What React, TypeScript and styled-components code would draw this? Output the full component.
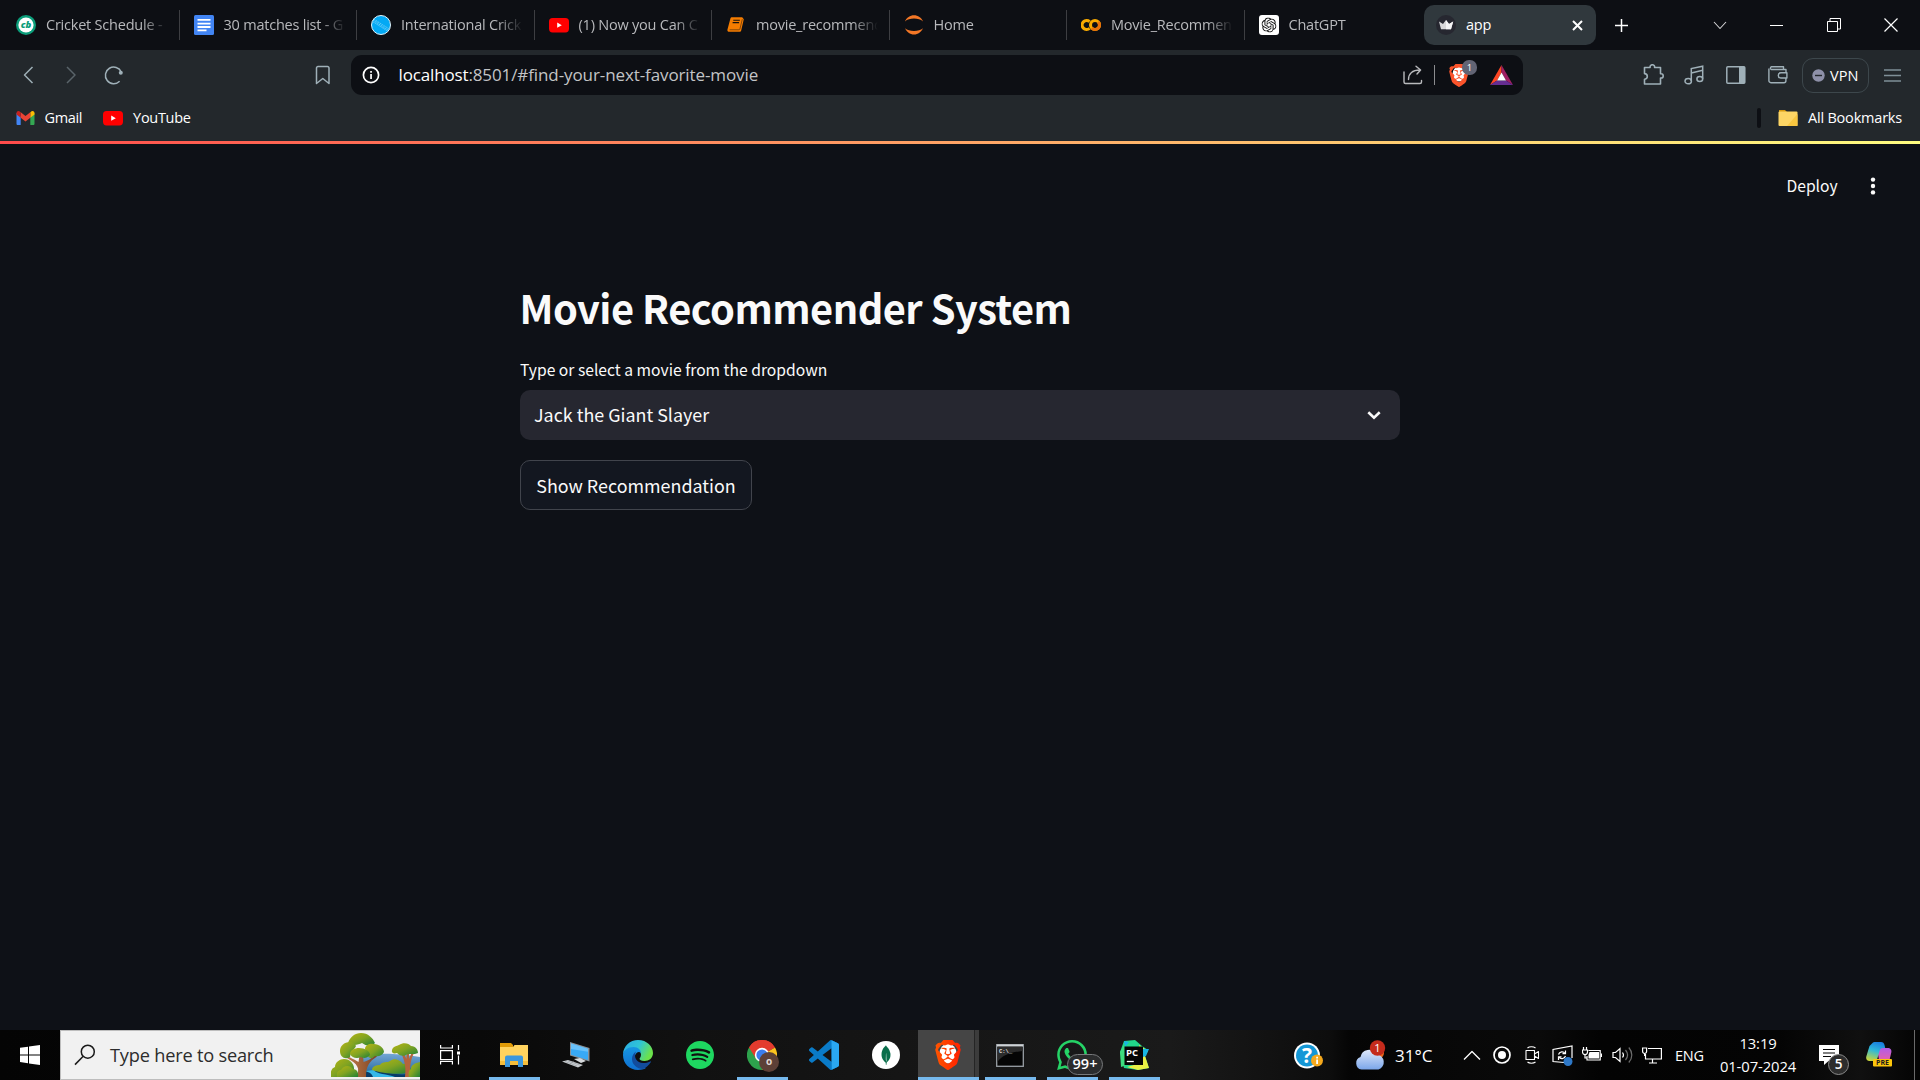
import React from "react";
import styled, { createGlobalStyle, css } from "styled-components";
import { SiBrave, SiMongodb, SiOpenai, SiSpotify, SiWhatsapp } from "react-icons/si";

const UI_FONT = `"Open Sans", "Noto Sans", sans-serif`;
const PAGE_FONT = `"Noto Sans CJK SC", "Noto Sans", sans-serif`;

const GlobalStyle = createGlobalStyle`
  * { box-sizing: border-box; }
  body { margin: 0; background: #0e1117; overflow: hidden; }
  svg { display: block; flex: none; }
  button { background: none; border: 0; padding: 0; color: inherit; font: inherit; }
`;

const Screen = styled.div`
  width: 1920px;
  height: 1080px;
  display: flex;
  flex-direction: column;
  overflow: hidden;
  font-family: ${UI_FONT};
  color: #fff;
`;

/* ---------- tab strip ---------- */

const TabStrip = styled.header`
  height: 50px;
  flex: none;
  display: flex;
  align-items: center;
  background: #0d0f14;
`;

const Tab = styled.div<{ $last?: boolean }>`
  width: 177.5px;
  height: 30px;
  flex: none;
  display: flex;
  align-items: center;
  gap: 10px;
  padding-left: 14px;
  border-right: 1px solid ${(p) => (p.$last ? "transparent" : "#3d3e42")};
`;

const TabList = styled.div`
  display: flex;
  padding-left: 2px;
`;

const TabTitle = styled.span`
  width: 122px;
  overflow: hidden;
  white-space: nowrap;
  font-size: 14.5px;
  line-height: 24px;
  letter-spacing: -0.22px;
  color: #b8b9bc;
  mask-image: linear-gradient(90deg, #000 96px, transparent 122px);
`;

const ActiveTab = styled.div`
  width: 172px;
  height: 40px;
  margin-left: 2px;
  display: flex;
  align-items: center;
  padding: 0 13px 0 12px;
  border-radius: 10px;
  background: #30383d;
`;

const ActiveTitle = styled.span`
  flex: 1;
  margin-left: 10px;
  font-size: 14.5px;
  line-height: 24px;
  letter-spacing: -0.2px;
`;

const NewTab = styled.button`
  margin-left: 18px;
`;

const WindowControls = styled.div`
  margin-left: auto;
  display: flex;
  align-items: center;
`;

const WindowButton = styled.button<{ $w: number }>`
  width: ${(p) => p.$w}px;
  height: 50px;
  display: flex;
  align-items: center;
  justify-content: center;
`;

/* ---------- toolbar ---------- */

const Toolbar = styled.div`
  height: 50px;
  flex: none;
  display: flex;
  align-items: center;
  background: #23282c;
`;

const ToolButton = styled.button<{ $ml?: number }>`
  margin-left: ${(p) => p.$ml ?? 0}px;
  display: flex;
`;

const AddressBar = styled.div`
  width: 1172px;
  height: 40px;
  margin-left: 20px;
  display: flex;
  align-items: center;
  padding: 0 10px 0 11px;
  border-radius: 11px;
  background: #0d0f14;
`;

const Url = styled.span`
  flex: 1;
  margin-left: 18.5px;
  font-size: 17px;
  line-height: 26px;
  letter-spacing: -0.1px;
  color: #c3c4c6;
`;

const Host = styled.span`
  color: #fff;
  letter-spacing: -0.15px;
`;

const AddressDivider = styled.i`
  width: 1px;
  height: 20px;
  margin: 0 14px 0 11px;
  background: #8b8c8f;
`;

const Shield = styled.div`
  position: relative;
  width: 20px;
  height: 23px;
  margin-right: 21px;
`;

const ShieldCount = styled.span`
  position: absolute;
  left: 13px;
  top: -4px;
  width: 15px;
  height: 15px;
  border-radius: 7px;
  background: #626474;
  font-size: 9.5px;
  line-height: 15px;
  text-align: center;
`;

const VpnPill = styled.button`
  width: 67px;
  height: 35px;
  margin-left: 14px;
  display: flex;
  align-items: center;
  gap: 5px;
  padding-left: 9px;
  border: 1px solid #3d474c;
  border-radius: 11px;
  font-size: 14.5px;
  letter-spacing: 0.1px;
`;

/* ---------- bookmarks ---------- */

const Bookmarks = styled.nav`
  height: 41px;
  flex: none;
  display: flex;
  align-items: center;
  padding: 0 18px 5px 15.5px;
  background: #23282c;
`;

const Bookmark = styled.a<{ $gap: number; $mr?: number; $ls: number }>`
  display: flex;
  align-items: center;
  gap: ${(p) => p.$gap}px;
  margin-right: ${(p) => p.$mr ?? 0}px;
  font-size: 14.5px;
  line-height: 24px;
  letter-spacing: ${(p) => p.$ls}px;
`;

const BookmarkDivider = styled.i`
  width: 4px;
  height: 20px;
  margin: 0 17px 0 auto;
  border-radius: 2px;
  background: #0d0f14;
`;

/* ---------- streamlit page ---------- */

const Decoration = styled.div`
  height: 3px;
  flex: none;
  background: linear-gradient(90deg, #ff4b4b, #fffd80);
`;

const Page = styled.main`
  flex: 1;
  background: #0e1117;
  font-family: ${PAGE_FONT};
  color: #fafafa;
`;

const PageHeader = styled.div`
  height: 84px;
  display: flex;
  align-items: center;
  justify-content: flex-end;
  gap: 32px;
  padding-right: 44.5px;
  font-size: 15.67px;
  letter-spacing: -0.05px;
`;

const HeaderLabel = styled.span`
  padding-bottom: 2px;
`;

const Block = styled.section`
  width: 880px;
  margin: 0 auto;
  padding-top: 49px;
  display: flex;
  flex-direction: column;
  align-items: flex-start;
`;

const Title = styled.h1`
  margin: 0 0 21px -0.5px;
  font-size: 39.8px;
  font-weight: 700;
  line-height: 60px;
  letter-spacing: -0.53px;
  white-space: nowrap;
`;

const Label = styled.label`
  font-size: 15.67px;
  line-height: 24px;
  margin-bottom: 8px;
`;

const Select = styled.div`
  width: 880px;
  height: 50px;
  display: flex;
  align-items: center;
  justify-content: space-between;
  padding: 0 19px 0 14px;
  border-radius: 10px;
  background: #262730;
  font-size: 17.9px;
`;

const SelectValue = styled.span`
  padding-bottom: 2px;
`;

const ActionButton = styled.button`
  width: 232px;
  height: 50px;
  margin-top: 20px;
  padding-bottom: 1px;
  border: 1px solid #41444c;
  border-radius: 10px;
  background: #131720;
  font-size: 17.9px;
`;

/* ---------- taskbar ---------- */

const Taskbar = styled.footer`
  height: 50px;
  flex: none;
  display: flex;
  background: linear-gradient(90deg, #040404 0, #090909 480px, #111 700px, #151515 900px, #1a1a1a 1170px, #0d0d0d 1330px, #050505 1350px, #0a0a0a 1540px, #030303 1600px, #040404 1780px, #101010 1860px, #040404 1920px);
`;

const Cell = styled.div<{ $w: number }>`
  width: ${(p) => p.$w}px;
  flex: none;
  display: flex;
  align-items: center;
  justify-content: center;
`;

const SearchBox = styled.div`
  width: 360px;
  display: flex;
  align-items: center;
  padding-left: 13px;
  border: 1px solid #bdbdbd;
  border-right: 0;
  background: #f1f1f1;
`;

const SearchHint = styled.span`
  flex: 1;
  margin-left: 14px;
  font-size: 18.2px;
  letter-spacing: -0.2px;
  color: #2c2c2c;
`;

const AppSlot = styled.div<{ $open?: boolean; $active?: boolean }>`
  width: 62px;
  flex: none;
  display: flex;
  flex-direction: column;
  align-items: center;
  justify-content: center;
  padding-top: 3px;
  ${(p) =>
    p.$active
      ? css`
          border-left: 1px solid transparent;
          background: linear-gradient(90deg, #454545 56px, #252525 56px, #252525 57px, #3c3c3c 57px) padding-box;
        `
      : ""}
  &::after {
    content: "";
    align-self: ${(p) => (p.$active ? "stretch" : "center")};
    width: ${(p) => (p.$active ? "auto" : "51px")};
    height: 3px;
    background: ${(p) => (p.$open ? "#76b9ed" : "transparent")};
  }
`;

const AppIcon = styled.div`
  position: relative;
  flex: 1;
  display: flex;
  align-items: center;
  justify-content: center;
`;

const ActiveAppIcon = styled.div`
  margin-right: 2px;
`;

const Unread = styled.span`
  position: absolute;
  left: 10px;
  top: 21px;
  width: 36px;
  height: 21px;
  border: 1px solid #77797b;
  border-radius: 11px;
  background: #2b2c2d;
  font-size: 14.5px;
  font-weight: 600;
  line-height: 18px;
  text-align: center;
`;

const AvatarBadge = styled.span`
  position: absolute;
  left: 12px;
  top: 19px;
  width: 20px;
  height: 20px;
  border-radius: 50%;
  background: #5d4037;
  font-size: 10px;
  font-weight: 700;
  line-height: 19px;
  text-align: center;
  color: #e0d8d4;
`;

const Tray = styled.div`
  margin-left: auto;
  display: flex;
  align-items: center;
`;

const TrayItem = styled.div<{ $ml: number }>`
  margin-left: ${(p) => p.$ml}px;
  display: flex;
`;

const TrayText = styled.span<{ $ml: number; $w: number; $size: number; $ls: number }>`
  width: ${(p) => p.$w}px;
  margin-left: ${(p) => p.$ml}px;
  font-size: ${(p) => p.$size}px;
  letter-spacing: ${(p) => p.$ls}px;
  white-space: nowrap;
`;

const Clock = styled.div`
  width: 78px;
  height: 50px;
  margin-left: 15px;
  display: flex;
  flex-direction: column;
  align-items: center;
  padding-top: 2px;
  font-size: 14.8px;
  line-height: 23px;
  letter-spacing: -0.1px;
  white-space: nowrap;
`;

const Notifications = styled.div`
  position: relative;
  margin-left: 22px;
`;

const NotificationCount = styled.span`
  position: absolute;
  left: 9px;
  top: 9px;
  width: 21px;
  height: 21px;
  border: 1px solid #8a8a8a;
  border-radius: 50%;
  background: #2d2d2d;
  font-size: 13.5px;
  font-weight: 600;
  line-height: 19px;
  text-align: center;
`;

const ShowDesktop = styled.i`
  width: 6px;
  height: 50px;
  margin-left: 22px;
  border-left: 1px solid #6a6a6a;
`;

/* ---------- tab icons ---------- */

const Cricbuzz = () => (
  <svg width="20" height="20" viewBox="0 0 20 20">
    <circle cx="10" cy="10" r="10" fill="#0b9d7a" />
    <circle cx="10" cy="10" r="7.6" fill="#fff" />
    <text x="10" y="13.3" textAnchor="middle" fontFamily="Open Sans" fontSize="9.5" fontWeight="800" fontStyle="italic" fill="#0b9d7a">cb</text>
  </svg>
);
const Docs = () => (
  <svg width="20" height="20" viewBox="0 0 20 20">
    <rect width="20" height="20" rx="1.5" fill="#4285f4" />
    <path d="M3.5 4.8h13M3.5 8.6h13M3.5 12h13M3.5 15.4h9" stroke="#fff" strokeWidth="1.8" />
  </svg>
);
const Ball = () => (
  <svg width="20" height="20" viewBox="0 0 20 20">
    <circle cx="10" cy="10" r="9.5" fill="#03a9f4" stroke="#dff3fd" strokeWidth="1" />
    <path d="M1.5 6.5l15 9.5M2.8 4.2l15 9.5M2 5.2l15 9.8" stroke="#7fd4fa" strokeWidth=".8" strokeDasharray="1.6 .7" />
  </svg>
);
const YouTube = () => (
  <svg width="20" height="20" viewBox="0 0 20 20">
    <rect y="3" width="20" height="14.4" rx="3.6" fill="#f00" />
    <path d="M8.2 7.6l4.6 2.6-4.6 2.6z" fill="#fff" />
  </svg>
);
const Notebook = () => (
  <svg width="20" height="20" viewBox="0 0 20 20">
    <path d="M6.1 2.2h10.1l1.6 2-2.6 11.2c-.2.9-.8 1.4-1.600 1.400H3.300c-1.300 0-2.200-.9-1.900-2.100L4.400 3.600c.2-.9.8-1.400 1.700-1.400z" fill="#f57c00" />
    <path d="M7.300 5.200h6.500M6.600 7.600h6.500" stroke="#14100c" strokeWidth="1.100" fill="none" />
    <path d="M3.600 14.800h9.400c.5 0 .8-.2.9-.7l2.400-9.900" stroke="#7a4208" strokeWidth=".9" fill="none" />
  </svg>
);
const Jupyter = () => (
  <svg width="20" height="20" viewBox="0 0 20 20" fill="#f37726">
    <path d="M1 6.4C2.6 2.7 6 .3 10 .3s7.400 2.400 9 6.100C16.800 4.600 13.600 3.600 10 3.600S3.200 4.600 1 6.400z" />
    <path d="M1 13.200c2.200 1.800 5.400 2.800 9 2.800s6.800-1 9-2.800c-1.600 3.700-5 6.300-9 6.300s-7.400-2.600-9-6.300z" />
  </svg>
);
const Colab = () => (
  <svg width="20" height="20" viewBox="0 0 20 20" fill="none" strokeWidth="3.100">
    <path d="M8.600 6.600A4.500 4.500 0 1 0 8.600 13.400" stroke="#f9ab00" />
    <circle cx="14" cy="10" r="4.500" stroke="#f9ab00" />
    <path d="M17.200 6.800A4.500 4.500 0 0 1 10.800 13.200" stroke="#e8710a" />
  </svg>
);
const ChatGpt = () => (
  <svg width="20" height="20" viewBox="0 0 20 20">
    <rect width="20" height="20" rx="3" fill="#fff" />
    <SiOpenai x={2.5} y={2.5} size={15} color="#111" />
  </svg>
);
const Crown = () => (
  <svg width="20" height="20" viewBox="0 0 20 20">
    <circle cx="10" cy="10" r="10" fill="#262730" />
    <path d="M3 6.600l4 2.500 3-4 3 4 4.200-2.500-2.200 7.600H5z" fill="#d8d8da" />
    <path d="M10 5.100l3 4 4.200-2.500-2.200 7.600h-5z" fill="#f4f4f5" />
  </svg>
);

/* ---------- browser icons ---------- */

const Stroke = ({ w, h, d, c = "#9fb0b8", s = 1.5 }: { w: number; h: number; d: string; c?: string; s?: number }) => (
  <svg width={w} height={h} viewBox={`0 0 ${w} ${h}`} fill="none" stroke={c} strokeWidth={s} strokeLinejoin="round">
    <path d={d} />
  </svg>
);
const Reload = () => (
  <svg width="20" height="20" viewBox="0 0 20 20" fill="none" stroke="#9fb0b8" strokeWidth="1.500">
    <path d="M15.600 16.200A8.300 8.300 0 1 1 17.300 7" />
    <circle cx="16.800" cy="7.700" r="2" fill="#9fb0b8" stroke="none" />
  </svg>
);
const Info = () => (
  <svg width="18" height="18" viewBox="0 0 18 18">
    <circle cx="9" cy="9" r="7.600" fill="none" stroke="#fff" strokeWidth="1.700" />
    <path d="M8.200 8h1.700v5H8.200zM8.200 5h1.700v1.700H8.200z" fill="#fff" />
  </svg>
);
const Share = () => (
  <svg width="20" height="20" viewBox="0 0 20 20" fill="none" stroke="#b9babd" strokeWidth="1.400" strokeLinejoin="round" strokeLinecap="round">
    <path d="M1 7v10a1.500 1.500 0 0 0 1.500 1.500h14.500a1.500 1.500 0 0 0 1.500-1.500v-1.500" />
    <path d="M5.500 14.500c0-5.500 3.500-9.500 11.500-9.500M13 1.200L17.600 5 14 9" />
  </svg>
);
const BraveShield = () => (
  <svg width="20" height="23" viewBox="0 0 20 23">
    <ellipse cx="10" cy="10" rx="6.500" ry="7.500" fill="#fff" />
    <SiBrave x={-1.500} y={0} size={23} color="#fb542b" />
  </svg>
);
const Bat = () => (
  <svg width="23" height="20" viewBox="0 0 23 20">
    <path d="M11.500 0L0 20l7-4.500 4.500-8z" fill="#ff4724" />
    <path d="M11.500 0L23 20l-7-4.500-4.500-8z" fill="#9e1f63" />
    <path d="M0 20h23l-7-4.500H7z" fill="#662d91" />
    <path d="M11.500 7.500L16 15.500H7z" fill="#fff" />
  </svg>
);
const Puzzle = () => (
  <Stroke w={22} h={22} d="M1.500 3.500h5.600a2.300 2.300 0 1 1 4.500 0h5.900v6.300h.6a2 2 0 0 1 0 4.200h-.6v6H1.500v-4.800a2.800 2.800 0 0 0 0-5.600z" s={1.600} />
);
const Music = () => (
  <svg width="20" height="20" viewBox="0 0 20 20" fill="none" stroke="#9fb0b8" strokeWidth="1.500">
    <path d="M7.300 16V3.600L18.700 1.200v12.600M7.300 8L18.700 5.200" />
    <ellipse cx="4.200" cy="16.200" rx="3.200" ry="2.600" />
    <ellipse cx="15.800" cy="14" rx="2.900" ry="2.500" />
  </svg>
);
const Sidebar = () => (
  <svg width="20" height="18" viewBox="0 0 20 18">
    <rect x=".8" y=".8" width="18" height="16.400" rx="1" fill="none" stroke="#9fb0b8" strokeWidth="1.500" />
    <path d="M13 .8h6v16.400h-6z" fill="#9fb0b8" />
  </svg>
);
const Wallet = () => (
  <Stroke w={20} h={18} d="M18 6V3.500H3.200a1.600 1.600 0 0 1 0-2.700H15.500v2.500M.9 2.500v12.200a2 2 0 0 0 2 2h13a2 2 0 0 0 2-2V12.500M18.900 6.800v5.200h-6a2.600 2.600 0 0 1 0-5.200z" s={1.400} />
);
const VpnDot = () => (
  <svg width="13" height="13" viewBox="0 0 13 13">
    <circle cx="6.500" cy="6.500" r="6.200" fill="#8e90a8" />
    <path d="M3 6.500h7" stroke="#23282c" strokeWidth="1.400" />
  </svg>
);
const Gmail = () => (
  <svg width="19" height="14" viewBox="0 0 19 14">
    <path d="M.5 2v10.700c0 .7.500 1.300 1.300 1.300H4.700V5z" fill="#4285f4" />
    <path d="M18.500 2v10.700c0 .7-.5 1.300-1.300 1.300H14.300V5z" fill="#34a853" />
    <path d="M14.300 1.300V6.800l4.200-3.200V2c0-1.700-1.900-2.500-3.100-1.600z" fill="#fbbc04" />
    <path d="M4.700 6.800V1.300l4.800 3.600 4.800-3.600v5.500L9.500 10.400z" fill="#ea4335" />
    <path d="M.5 2v1.600l4.200 3.200V1.300L3.600.4C2.400-.5.5.3.5 2z" fill="#c5221f" />
  </svg>
);
const BookmarkFolder = () => (
  <svg width="20" height="17" viewBox="0 0 20 17">
    <path d="M1 0h6l2 2H1z" fill="#d99a10" />
    <rect x=".5" y="1.500" width="19" height="14.500" rx="1" fill="#fdd565" />
    <path d="M9 16L19.500 4v12z" fill="#f8c640" />
  </svg>
);

/* ---------- taskbar icons ---------- */

const Windows = () => (
  <svg width="20" height="20" viewBox="0 0 20 20" fill="#fff">
    <path d="M0 2.800L8 1.700V9.400H0zM9 1.600L20 0v9.400H9zM0 10.400h8v7.800l-8-1.100zM9 10.400h11V20L9 18.400z" />
  </svg>
);
const Magnifier = () => (
  <svg width="22" height="22" viewBox="0 0 22 22" fill="none" stroke="#1a1a1a" strokeWidth="1.500">
    <circle cx="13.800" cy="7.700" r="6.500" />
    <path d="M9.200 12.300L1 20.600" />
  </svg>
);
const Landscape = () => (
  <svg width="89" height="44" viewBox="0 0 89 44">
    <defs>
      <linearGradient id="leaf" x1="0" y1="0" x2="1" y2="1"><stop offset="0" stopColor="#b7b512" /><stop offset=".5" stopColor="#80a322" /><stop offset="1" stopColor="#1f8136" /></linearGradient>
      <linearGradient id="hill" x1="0" y1="0" x2="0" y2="1"><stop offset="0" stopColor="#73a6d4" /><stop offset="1" stopColor="#1b5f96" /></linearGradient>
      <linearGradient id="trunk" x1="0" y1="0" x2="1" y2="0"><stop offset="0" stopColor="#c07a48" /><stop offset="1" stopColor="#7d4425" /></linearGradient>
    </defs>
    <path d="M30 26C42 19 60 20 89 24v20H26z" fill="url(#hill)" />
    <path d="M31 39c8-3 20 0 34 2 8 1 14 0 24-2v5H31z" fill="#073c68" />
    <path d="M33 38c6 1 8 3 9 6h22c-7-3-20-3-21-7z" fill="#35b8e8" />
    <path d="M41 37c0-4 5-5 8-5 2-4 8-2 10-4 5-4 11 0 13 3 5-1 8 3 8 8-8 3-28 2-39-2z" fill="url(#leaf)" />
    <path d="M74 44c.8-8 .8-14-4-24l2-1 3.500 7 0-8h2.500l0 8 3-7 2 1c-4 8-4 14-4 24z" fill="#b5643c" />
    <path d="M61 17c1-4 5-4 7-5 4-3 10-2 12 1 5 0 7 4 7 7-4 2-9 0-12 2-4 2-7 0-9-2-3 1-6 0-5-3z" fill="url(#leaf)" />
    <path d="M26 44c3-9 1-13-10-19l1.500-1.500c5 3 8 4 10 5.500L29 19h3l.5 10c4-1 7-3 12-7l1.500 1.500c-8 5-11 10-11 20.500z" fill="url(#trunk)" />
    <path d="M17 10c2-6 7-10 13-10 7 0 12 5 14 10-4 4-9 3-13 0-4 2-10 3-14 0z" fill="url(#leaf)" />
    <path d="M9 18c0-5 4-9 10-9 3 0 5 2 6 4-2 4-5 5-6 11-5 3-10 0-10-6z" fill="url(#leaf)" />
    <path d="M34 16c0-4 5-6 9-5 5 0 10 4 10 8-2 4-6 5-9 4-3 3-7 3-8-2z" fill="url(#leaf)" />
    <path d="M19 21c0-4 5-6 9-6 6 0 11 3 11 7-3 3-6 4-9 2-4 2-9 1-11-3z" fill="url(#leaf)" />
    <path d="M0 44c-1-6 1-9 4-10 0-5 5-8 9-8 6 0 10 5 10 9v9z" fill="url(#leaf)" />
    <path d="M6 44c-1-4 1-7 4-7 3-5 9-5 12-1 4 0 6 4 5 8z" fill="url(#leaf)" />
    <path d="M78 44c-1-4 0-7 2-8 0-4 4-6 9-7v15z" fill="url(#leaf)" />
  </svg>
);
const TaskView = () => (
  <svg width="20" height="20" viewBox="0 0 20 20" fill="none" stroke="#fff" strokeWidth="1.200">
    <path d="M.6 5.600h11.800v9H.6zM.6 0v3h11.800V0M.6 19.500v-3h11.800v3M18.500 0v5M18.500 10.500v9" />
    <path d="M17 6.500h3v3h-3z" fill="#fff" stroke="none" />
  </svg>
);
const Explorer = () => (
  <svg width="28" height="24" viewBox="0 0 28 24">
    <path d="M0 0h11l2 2v4H0z" fill="#e09b07" />
    <path d="M0 4h13l1.500-2H28v20H0z" fill="#ffd35e" />
    <path d="M0 18h28v4H0z" fill="#f4bd3b" />
    <path d="M5 24V14.500a2 2 0 0 1 2-2h14a2 2 0 0 1 2 2V24h-5v-6H10v6z" fill="#3b97dd" />
  </svg>
);
const Computer = () => (
  <svg width="28" height="26" viewBox="0 0 28 26">
    <path d="M8 0l19.500 6v13.500L8 13.500z" fill="#8b9196" />
    <path d="M9 1.500l17 5.200v11.400L9 12.800z" fill="#38a9f5" />
    <path d="M9 1.500l17 5.200v3L9 7z" fill="#69c1f9" />
    <path d="M12 17l6-1 6 3-5 2z" fill="#d7dadc" />
    <path d="M0 19.500l6-1.500 15 5-5 2.500z" fill="#c9cdd0" />
    <path d="M3 19.500l12 4.500M6 19l12 4M8 22l4-3" stroke="#8b9196" strokeWidth=".5" />
  </svg>
);
const Edge = () => (
  <svg width="30" height="30" viewBox="0 0 30 30">
    <defs>
      <linearGradient id="edgeTop" x1="0" y1="0" x2="1" y2=".4"><stop offset="0" stopColor="#2aa9e6" /><stop offset=".55" stopColor="#2fc5d6" /><stop offset="1" stopColor="#6be24b" /></linearGradient>
      <linearGradient id="edgeSide" x1="0" y1="0" x2="0" y2="1"><stop offset="0" stopColor="#1796e2" /><stop offset="1" stopColor="#0f6fd0" /></linearGradient>
    </defs>
    <path d="M0 14C.5 6 7 0 15 0c9 0 15 6.500 15 13 0 5-4 8-8.500 8-3.500 0-5-1.300-5-2.200 0-.7 1.500-1.600 1.500-4C18 11 14.500 9 10.500 9 6 9 1 11 0 14z" fill="url(#edgeTop)" />
    <path d="M0 15c0-4.500 5-8 10.500-8 5 0 7.500 3.500 7.500 6-2.500-3-7 .5-6 6 .8 5 5.500 9 11 9.300C20.500 29.500 18 30 15 30 6.500 30 0 23.500 0 15z" fill="url(#edgeSide)" />
    <path d="M9 19c0-3 1.500-6 4-7.500C10 17 14 24 22 23c2.500-.3 4.500-1.300 5.300-1.600.6-.2.900.2.600.7C26 25.500 23 28 20 29 14 29 9 24.500 9 19z" fill="#124c9c" />
  </svg>
);
const Chrome = () => (
  <svg width="30" height="30" viewBox="0 0 30 30">
    <path d="M15 15L2 7.500A15 15 0 0 1 28 7.500z" fill="#e33b2e" />
    <path d="M15 15L2 7.500A15 15 0 0 0 15 30l6.500-11.300z" fill="#2da24c" />
    <path d="M15 15l13-7.500A15 15 0 0 1 15 30l6.500-11.300z" fill="#fcc31e" />
    <path d="M15 7.800h13.100A15 15 0 0 0 2 7.500l6.800 11z" fill="#e33b2e" />
    <circle cx="15" cy="15" r="7.200" fill="#fff" />
    <circle cx="15" cy="15" r="5.600" fill="#3b7ded" />
  </svg>
);
const VsCode = () => (
  <svg width="30" height="30" viewBox="0 0 24 24">
    <path fill="#0a7bc8" d="M23.150 2.587L18.210.21a1.494 1.494 0 0 0-1.705.29l-9.460 8.630-4.120-3.128a.999.999 0 0 0-1.276.057L.327 7.261A1 1 0 0 0 .326 8.740L3.899 12 .326 15.260a1 1 0 0 0 .001 1.479L1.650 17.940a.999.999 0 0 0 1.276.057l4.120-3.128 9.460 8.630a1.492 1.492 0 0 0 1.704.29l4.942-2.377A1.500 1.500 0 0 0 24 20.060V3.939a1.500 1.500 0 0 0-.85-1.352zm-5.146 14.861L10.826 12l7.178-5.448v10.896z" />
    <path fill="#2aa8f2" d="M18 .1l5.150 2.487A1.500 1.500 0 0 1 24 3.939V20.060a1.500 1.500 0 0 1-.85 1.352L18.200 23.800z" />
  </svg>
);
const Mongo = () => (
  <svg width="28" height="28" viewBox="0 0 28 28">
    <circle cx="14" cy="14" r="14" fill="#fff" />
    <SiMongodb x={4} y={4} size={20} color="#0a6e4b" />
  </svg>
);
const BraveApp = () => (
  <svg width="26" height="30" viewBox="0 0 26 30">
    <defs>
      <linearGradient id="brave" x1="0" x2="1"><stop offset="0" stopColor="#ff5500" /><stop offset="1" stopColor="#ff2000" /></linearGradient>
    </defs>
    <ellipse cx="13" cy="13.500" rx="8.500" ry="10" fill="#fff" />
    <SiBrave x={-2} y={0} size={30} style={{ fill: "url(#brave)" }} />
  </svg>
);
const Terminal = () => (
  <svg width="28" height="23" viewBox="0 0 28 23">
    <rect x=".7" y=".7" width="26.600" height="21.600" fill="#050505" stroke="#9aa0a6" strokeWidth="1.300" />
    <path d="M1 1.500h26" stroke="#cfd3d6" strokeWidth="2" />
    <path d="M1.500 3h25v4C16 8 6 11 1.500 18z" fill="#2c2c2c" />
    <text x="3" y="8.800" fontFamily="Liberation Mono" fontSize="5.500" fontWeight="700" fill="#e4e4e4">C:\_</text>
  </svg>
);
const PyCharm = () => (
  <svg width="30" height="30" viewBox="0 0 30 30">
    <path d="M1 12L5 1l11-1 7 6 6 4-3 6 4 12-11 2-14-2z" fill="#21d789" />
    <path d="M20 5l9 6-3 5 4 12-11 2-11-3 14-4z" fill="#e8f044" />
    <path d="M24 9l6 0-3 7-3 1zM5 1l5 1-4 5z" fill="#18b6e4" />
    <path d="M1 12L5 5l3 20-6 2z" fill="#3ddc7f" />
    <rect x="5.500" y="6.500" width="18.500" height="18.500" fill="#050505" />
    <text x="7" y="15.800" fontFamily="Open Sans" fontSize="9.500" fontWeight="700" fill="#fff">PC</text>
    <path d="M7.800 21.500h7" stroke="#fff" strokeWidth="1.300" />
  </svg>
);
const Help = () => (
  <svg width="30" height="27" viewBox="0 0 30 27">
    <circle cx="13" cy="13.500" r="13" fill="#fff" />
    <circle cx="13" cy="13.500" r="11" fill="#1497d6" />
    <text x="13" y="21" textAnchor="middle" fontFamily="Open Sans" fontSize="21" fontWeight="700" fill="#fff">?</text>
    <circle cx="23" cy="18.500" r="6" fill="#f5a81c" />
    <path d="M22.200 17.500h1.800v4.500h-1.800zM22.200 14.700h1.800v1.700h-1.800z" fill="#fff" />
  </svg>
);
const Weather = () => (
  <svg width="31" height="30" viewBox="0 0 31 30">
    <defs>
      <linearGradient id="cloud" x1="0" y1="0" x2="0" y2="1"><stop offset="0" stopColor="#dfe9fb" /><stop offset="1" stopColor="#7ba6ea" /></linearGradient>
    </defs>
    <circle cx="23" cy="13" r="6" fill="#e8641b" />
    <path d="M6.500 29.500A6.500 6.500 0 0 1 5.500 17a8.500 8.500 0 0 1 16-2.500A7.700 7.700 0 0 1 23.500 29.500z" fill="url(#cloud)" />
    <circle cx="22.500" cy="8" r="7.700" fill="#c42b1c" />
    <text x="22.500" y="12" textAnchor="middle" fontFamily="Open Sans" fontSize="11" fill="#fff">1</text>
  </svg>
);
const Recording = () => (
  <svg width="18" height="18" viewBox="0 0 18 18">
    <circle cx="9" cy="9" r="8" fill="none" stroke="#fff" strokeWidth="1.700" />
    <circle cx="9" cy="9" r="4" fill="#fff" />
  </svg>
);
const MeetNow = () => (
  <Stroke w={15} h={18} c="#fff" s={1.100} d="M1 4.500h8.500v9H1zM9.500 8l4-2.500v7l-4-2.500M2.500 2c1.800-1.600 6-1.600 8 0M2.500 16c1.800 1.600 6 1.600 8 0" />
);
const Sync = () => (
  <svg width="21" height="21" viewBox="0 0 21 21" fill="none" stroke="#fff" strokeWidth="1.200">
    <path d="M12 17.500L1 16.500V4.500L20 1v12" />
    <path d="M6.500 9.500c1-3 5-3.500 6.500-1M13.500 5.500v3.200h-3M13.500 11c-1 3-5 3.500-6.500 1M6.500 15v-3.200h3" />
    <circle cx="16" cy="16.500" r="4.500" fill="#2e78c7" stroke="none" />
  </svg>
);
const Battery = () => (
  <svg width="20" height="16" viewBox="0 0 20 16" fill="none" stroke="#fff" strokeWidth="1.200">
    <path d="M1.500 0v3M4.500 0v3M.5 3h5v2a2.500 2.500 0 0 1-5 0zM3 7.500V11h2M6.500 3.500H18.200v9.500H5V9" />
    <path d="M7.500 5H17v6.500H6.500V8z" fill="#fff" stroke="none" />
    <path d="M19.400 6.500v3.500" />
  </svg>
);
const Speaker = () => (
  <svg width="21" height="18" viewBox="0 0 21 18" fill="none" stroke="#fff" strokeWidth="1.200">
    <path d="M1 6.500h2.500L8 2.500v13l-4.500-4H1z" />
    <path d="M10.500 6.500c1.200 1.500 1.200 3.500 0 5" />
    <path d="M13.500 4c2.500 3 2.500 7 0 10M16.800 1.500c4 4.500 4 10.500 0 15" stroke="#6d6d6d" />
  </svg>
);
const Network = () => (
  <svg width="20" height="17" viewBox="0 0 20 17" fill="none" stroke="#fff" strokeWidth="1.200">
    <path d="M6 1.500h13.400v10.500H3.500V7M10.500 12v4M7 16h8M.6 1h4v3.500a2 2 0 0 1-4 0zM2.600 6v3" />
  </svg>
);
const ActionCenter = () => (
  <svg width="20" height="20" viewBox="0 0 20 20">
    <path d="M0 0h20v16H9.500L5 20v-4H0z" fill="#fff" />
    <path d="M4 4.500h12M4 8h12M4 11.500h8" stroke="#050505" strokeWidth="1.100" />
  </svg>
);
const Copilot = () => (
  <svg width="26" height="26" viewBox="0 0 26 26">
    <defs>
      <linearGradient id="copL" x1=".6" y1="0" x2=".3" y2="1"><stop offset="0" stopColor="#1a7fe0" /><stop offset=".45" stopColor="#2fb8d8" /><stop offset="1" stopColor="#c9d63b" /></linearGradient>
      <linearGradient id="copR" x1=".5" y1="0" x2=".5" y2="1"><stop offset="0" stopColor="#b25be8" /><stop offset="1" stopColor="#f0629c" /></linearGradient>
    </defs>
    <path d="M11 6h10.500c3 0 4.500 2 3.800 4.500L23.500 18c-.6 2-2 3-4 3h-6z" fill="url(#copR)" />
    <path d="M6.500 1C7 .4 8 0 9.500 0H15c2 0 3 1 3.500 3l.7 3H17c-2 0-3 1-3.500 3l-2 7c-.5 2-1.500 3-3.500 3H3.500C.8 19-.3 17 .3 14.500L3.500 4z" fill="url(#copL)" />
    <rect x="7" y="17" width="19" height="7.500" rx="1" fill="#fdc60b" />
    <text x="16.500" y="23.300" textAnchor="middle" fontFamily="Open Sans" fontSize="7" fontWeight="700" fill="#1b1b1b">PRE</text>
  </svg>
);

const TABS: { title: string; icon: React.ReactNode }[] = [
  { title: "Cricket Schedule -", icon: <Cricbuzz /> },
  { title: "30 matches list - G", icon: <Docs /> },
  { title: "International Crick", icon: <Ball /> },
  { title: "(1) Now you Can C", icon: <YouTube /> },
  { title: "movie_recommenc", icon: <Notebook /> },
  { title: "Home", icon: <Jupyter /> },
  { title: "Movie_Recommen", icon: <Colab /> },
  { title: "ChatGPT", icon: <ChatGpt /> },
];

const APPS: { icon: React.ReactNode; open?: boolean; active?: boolean }[] = [
  { icon: <Explorer />, open: true },
  { icon: <Computer /> },
  { icon: <Edge /> },
  { icon: <SiSpotify size={28} color="#1ed760" /> },
  { icon: <><Chrome /><AvatarBadge>o</AvatarBadge></>, open: true },
  { icon: <VsCode /> },
  { icon: <Mongo /> },
  { icon: <ActiveAppIcon><BraveApp /></ActiveAppIcon>, open: true, active: true },
  { icon: <Terminal />, open: true },
  { icon: <><SiWhatsapp size={30} color="#25d366" /><Unread>99+</Unread></>, open: true },
  { icon: <PyCharm />, open: true },
];

export default function App() {
  return (
    <Screen>
      <GlobalStyle />
      <TabStrip>
        <TabList>
          {TABS.map((t, i) => (
            <Tab key={t.title} $last={i === TABS.length - 1}>
              {t.icon}
              <TabTitle>{t.title}</TabTitle>
            </Tab>
          ))}
        </TabList>
        <ActiveTab>
          <Crown />
          <ActiveTitle>app</ActiveTitle>
          <Stroke w={11} h={11} d="M1 1l9 9M10 1l-9 9" c="#fff" s={2} />
        </ActiveTab>
        <NewTab><Stroke w={15} h={15} d="M7.500 1v13M1 7.500h13" c="#fff" s={1.500} /></NewTab>
        <WindowControls>
          <WindowButton $w={57}><Stroke w={14} h={9} d="M1 1l6 6.500 6-6.500" c="#d6d6d8" s={1.100} /></WindowButton>
          <WindowButton $w={57}><Stroke w={13} h={1} d="M0 .5h13" c="#fff" s={1} /></WindowButton>
          <WindowButton $w={57}><Stroke w={14} h={14} d="M.5 3.500h10v10H.5zM3 3V.5h10.500V11H11" c="#fff" s={1} /></WindowButton>
          <WindowButton $w={58}><Stroke w={14} h={14} d="M.5.5l13 13M13.500.5l-13 13" c="#fff" s={1.200} /></WindowButton>
        </WindowControls>
      </TabStrip>

      <Toolbar>
        <ToolButton $ml={23}><Stroke w={11} h={18} d="M9.500 1L1.500 9l8 8" /></ToolButton>
        <ToolButton $ml={32}><Stroke w={11} h={18} d="M1 1l8 8-8 8" c="#5a646a" /></ToolButton>
        <ToolButton $ml={27}><Reload /></ToolButton>
        <ToolButton $ml={191}><Stroke w={16} h={20} d="M1.500 18.500V3a1.500 1.500 0 0 1 1.500-1.500h9.500A1.500 1.500 0 0 1 14 3v15.500l-6.200-5z" /></ToolButton>
        <AddressBar>
          <Info />
          <Url><Host>localhost</Host>:8501/#find-your-next-favorite-movie</Url>
          <Share />
          <AddressDivider />
          <Shield>
            <BraveShield />
            <ShieldCount>1</ShieldCount>
          </Shield>
          <Bat />
        </AddressBar>
        <ToolButton $ml={120}><Puzzle /></ToolButton>
        <ToolButton $ml={19}><Music /></ToolButton>
        <ToolButton $ml={22}><Sidebar /></ToolButton>
        <ToolButton $ml={22}><Wallet /></ToolButton>
        <VpnPill><VpnDot />VPN</VpnPill>
        <ToolButton $ml={15}><Stroke w={17} h={13} d="M0 1h17M0 6.500h17M0 12h17" c="#7f8f97" s={1.400} /></ToolButton>
      </Toolbar>

      <Bookmarks>
        <Bookmark $gap={10} $mr={21} $ls={-0.35}><Gmail />Gmail</Bookmark>
        <Bookmark $gap={10} $ls={-0.3}><YouTube />YouTube</Bookmark>
        <BookmarkDivider />
        <Bookmark $gap={10} $ls={-0.2}><BookmarkFolder />All Bookmarks</Bookmark>
      </Bookmarks>

      <Decoration />
      <Page>
        <PageHeader>
          <HeaderLabel>Deploy</HeaderLabel>
          <svg width="6" height="18" viewBox="0 0 6 18" fill="#fafafa">
            <circle cx="3" cy="2.600" r="2.200" /><circle cx="3" cy="9" r="2.200" /><circle cx="3" cy="15.400" r="2.200" />
          </svg>
        </PageHeader>
        <Block>
          <Title>Movie Recommender System</Title>
          <Label>Type or select a movie from the dropdown</Label>
          <Select>
            <SelectValue>Jack the Giant Slayer</SelectValue>
            <svg width="14" height="9" viewBox="0 0 14 9" fill="none" stroke="#fafafa" strokeWidth="2.600">
              <path d="M1.300 1.300L7 6.700l5.700-5.400" />
            </svg>
          </Select>
          <ActionButton>Show Recommendation</ActionButton>
        </Block>
      </Page>

      <Taskbar>
        <Cell $w={60}><Windows /></Cell>
        <SearchBox>
          <Magnifier />
          <SearchHint>Type here to search</SearchHint>
          <Landscape />
        </SearchBox>
        <Cell $w={60}><TaskView /></Cell>
        <Cell $w={3} />
        {APPS.map((a, i) => (
          <AppSlot key={i} $open={a.open} $active={a.active}>
            <AppIcon>{a.icon}</AppIcon>
          </AppSlot>
        ))}
        <Tray>
          <TrayItem $ml={0}><Help /></TrayItem>
          <TrayItem $ml={31}><Weather /></TrayItem>
          <TrayText $ml={9} $w={39} $size={17} $ls={0}>31°C</TrayText>
          <TrayItem $ml={29}><Stroke w={18} h={11} d="M1 9.500l8-8 8 8" c="#fff" s={1.300} /></TrayItem>
          <TrayItem $ml={12}><Recording /></TrayItem>
          <TrayItem $ml={14}><MeetNow /></TrayItem>
          <TrayItem $ml={12}><Sync /></TrayItem>
          <TrayItem $ml={9}><Battery /></TrayItem>
          <TrayItem $ml={10}><Speaker /></TrayItem>
          <TrayItem $ml={9}><Network /></TrayItem>
          <TrayText $ml={13} $w={29} $size={14.5} $ls={-0.2}>ENG</TrayText>
          <Clock><span>13:19</span><span>01-07-2024</span></Clock>
          <Notifications>
            <ActionCenter />
            <NotificationCount>5</NotificationCount>
          </Notifications>
          <TrayItem $ml={27}><Copilot /></TrayItem>
          <ShowDesktop />
        </Tray>
      </Taskbar>
    </Screen>
  );
}
